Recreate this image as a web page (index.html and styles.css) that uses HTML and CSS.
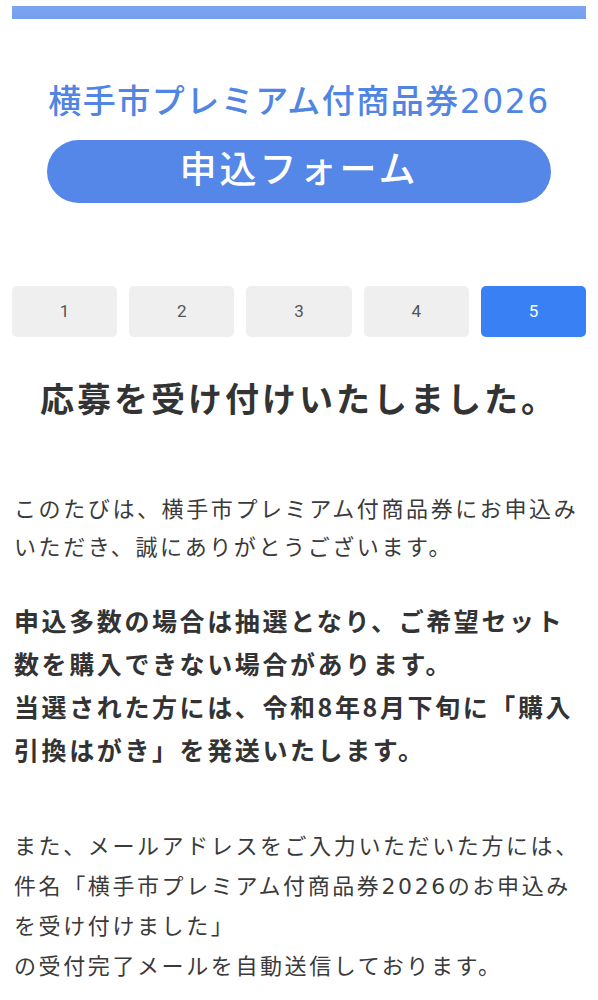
FILE: index.html
```html
<!DOCTYPE html>
<html lang="ja">
<head>
    <meta charset="UTF-8">
    <meta name="viewport" content="width=device-width, initial-scale=1.0">
    <title>申込フォーム</title>
    <link rel="stylesheet" href="styles.css">
</head>
<body>

    <div class="page">
        <div class="top-bar"></div>

        <header class="header">
            <h1 class="title">横手市プレミアム付商品券2026</h1>
            <div class="form-label">申込フォーム</div>
        </header>

        <div class="steps">
            <div class="step">1</div>
            <div class="step">2</div>
            <div class="step">3</div>
            <div class="step">4</div>
            <div class="step active">5</div>
        </div>

        <h2 class="done">応募を受け付けいたしました。</h2>

        <p class="text">このたびは、横手市プレミアム付商品券にお申込みいただき、誠にありがとうございます。</p>

        <p class="notice">申込多数の場合は抽選となり、ご希望セット数を購入できない場合があります。<br>当選された方には、令和8年8月下旬に「購入引換はがき」を発送いたします。</p>

        <p class="text mail">また、メールアドレスをご入力いただいた方には、件名「横手市プレミアム付商品券2026のお申込みを受け付けました」<br>の受付完了メールを自動送信しております。</p>
    </div>

</body>
</html>
```

FILE: styles.css
```css
body {
    margin: 0;
    font-family: "DejaVu Sans", "Noto Sans CJK JP", sans-serif;
    background-color: #ffffff;
    color: #333;
}
.page {
    padding: 6px 12px 0;
}
.top-bar {
    height: 13px;
    background: linear-gradient(#7ea4f1, #75a0ef);
}
.header {
    margin: 60px 35px 0;
    text-align: center;
}
.title {
    margin: 0;
    font-size: 33px;
    font-weight: 500;
    color: #5085e4;
    letter-spacing: 1.5px;
    line-height: 46px;
}
.form-label {
    margin-top: 15px;
    height: 63px;
    line-height: 62px;
    border-radius: 32px;
    background-color: #5587e8;
    color: #fff;
    font-size: 37px;
    font-weight: 500;
    letter-spacing: 3px;
}
.steps {
    display: flex;
    gap: 12px;
    margin-top: 83px;
}
.step {
    flex: 1;
    height: 51px;
    line-height: 51px;
    text-align: center;
    background-color: #efefef;
    border-radius: 5px;
    font-family: Roboto, "Noto Sans", sans-serif;
    font-size: 17px;
    color: #555;
}
.step.active {
    background-color: #3a80f5;
    color: #fff;
}
.done {
    margin: 35px 0 0;
    text-align: center;
    font-size: 34px;
    font-weight: 700;
    letter-spacing: 3px;
    line-height: 56px;
    color: #333;
}
.text {
    margin: 63px 0 0;
    padding-left: 2px;
    font-size: 22px;
    line-height: 38px;
    letter-spacing: 2.6px;
    color: #3a3a3a;
}
.notice {
    margin: 32px 0 0;
    padding-left: 2px;
    font-family: "Noto Sans CJK JP", sans-serif;
    font-size: 25px;
    font-weight: 700;
    line-height: 43px;
    letter-spacing: 2.6px;
    color: #333;
}
.text.mail {
    margin-top: 56px;
    line-height: 40px;
}
```
